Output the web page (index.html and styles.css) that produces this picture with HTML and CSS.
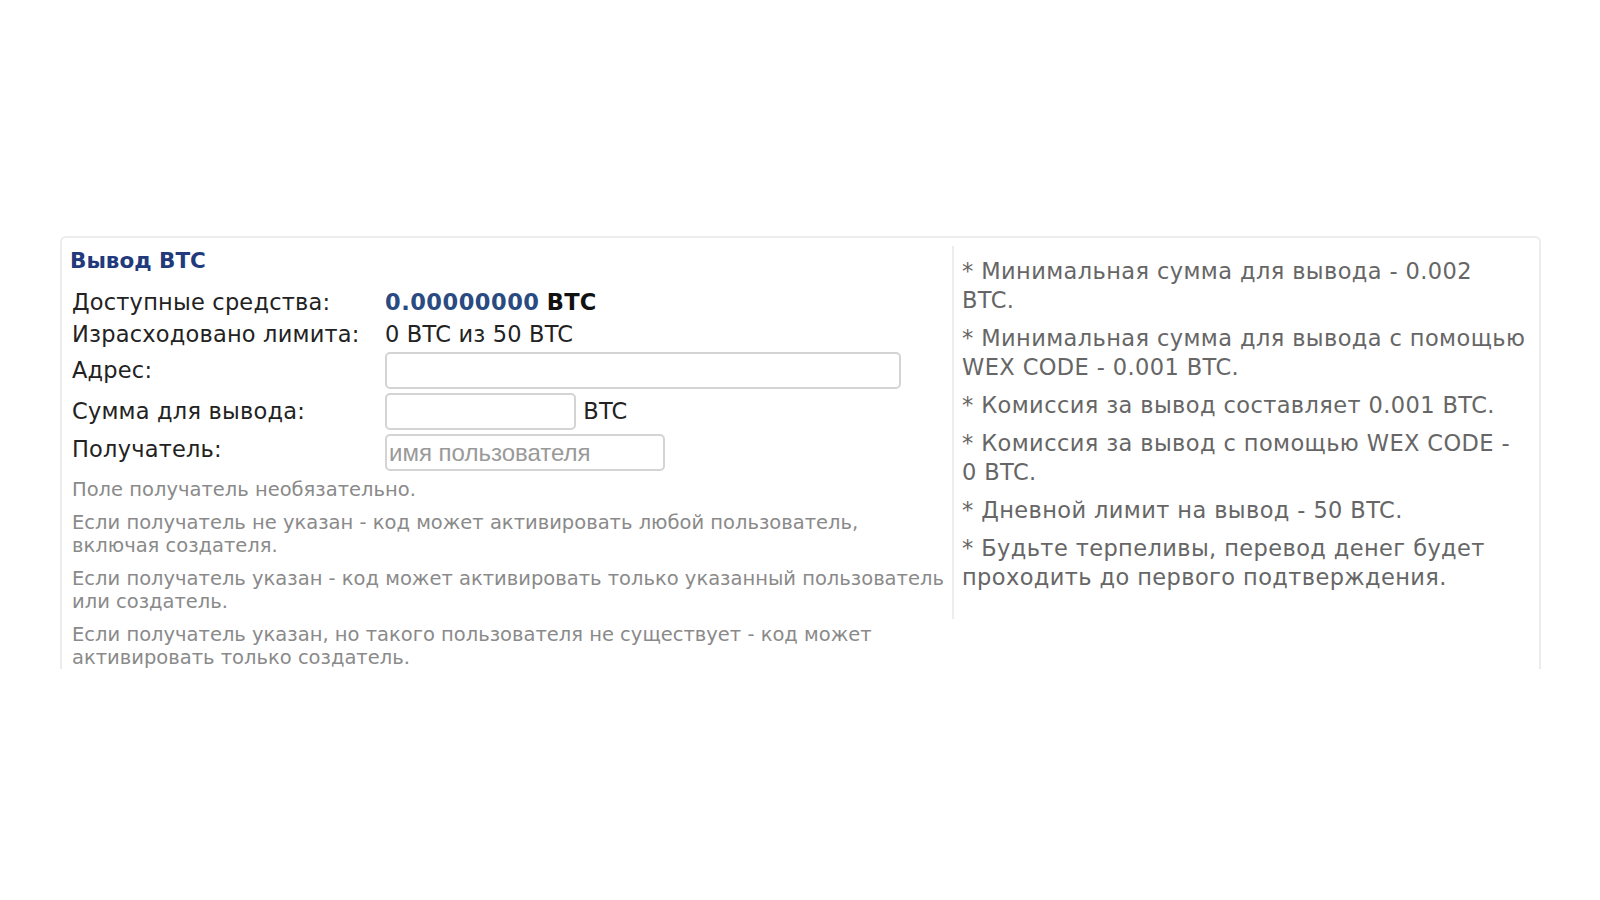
FILE: index.html
```html
<!DOCTYPE html>
<html lang="ru">
<head>
  <meta charset="UTF-8">
  <title>Вывод BTC</title>
  <link rel="stylesheet" href="styles.css">
</head>
<body>

  <div class="panel">
    <div class="left">
      <h2 class="title">Вывод BTC</h2>

      <div class="form">
        <div class="label">Доступные средства:</div>
        <div class="value"><span class="amount">0.00000000</span> <b>BTC</b></div>

        <div class="label">Израсходовано лимита:</div>
        <div class="value">0 BTC из 50 BTC</div>

        <div class="label field">Адрес:</div>
        <div class="value field"><input class="input wide" type="text"></div>

        <div class="label field">Сумма для вывода:</div>
        <div class="value field"><input class="input short" type="text"> BTC</div>

        <div class="label field top">Получатель:</div>
        <div class="value field"><input class="input mid" type="text" placeholder="имя пользователя"></div>
      </div>

      <div class="notes">
        <p>Поле получатель необязательно.</p>
        <p>Если получатель не указан - код может активировать любой пользователь, включая создателя.</p>
        <p>Если получатель указан - код может активировать только указанный пользователь или создатель.</p>
        <p>Если получатель указан, но такого пользователя не существует - код может активировать только создатель.</p>
      </div>
    </div>

    <div class="right">
      <p>* Минимальная сумма для вывода - 0.002 BTC.</p>
      <p>* Минимальная сумма для вывода с помощью WEX CODE - 0.001 BTC.</p>
      <p>* Комиссия за вывод составляет 0.001 BTC.</p>
      <p>* Комиссия за вывод с помощью WEX CODE - 0 BTC.</p>
      <p>* Дневной лимит на вывод - 50 BTC.</p>
      <p>* Будьте терпеливы, перевод денег будет проходить до первого подтверждения.</p>
    </div>
  </div>

</body>
</html>
```

FILE: styles.css
```css
body {
  margin: 0;
  background: white;
  font-family: 'DejaVu Sans', Verdana, sans-serif;
  color: #222;
}

.panel {
  margin: 236px 0 0 60px;
  width: 1477px;
  height: 431px;
  overflow: hidden;
  border: 2px solid #ececec;
  border-bottom: none;
  border-radius: 6px 6px 0 0;
  display: flex;
}

.left {
  width: 882px;
  padding: 0 0 0 8px;
  flex-shrink: 0;
}

.title {
  margin: 10px 0 0 0;
  font-size: 21.5px;
  line-height: 26px;
  font-weight: bold;
  color: #223a7c;
}

.form {
  display: grid;
  grid-template-columns: 313px 1fr;
  margin: 12px 0 0 2px;
  font-size: 22.5px;
  letter-spacing: 0.2px;
}

.label,
.value {
  height: 32px;
  line-height: 32px;
}

.label.field,
.value.field {
  padding-top: 2px;
  height: 39px;
  line-height: 37px;
}

.label.top {
  line-height: 31px;
}

.amount {
  color: #2a4a82;
  font-weight: bold;
  letter-spacing: 0.5px;
}

.value b {
  color: #111;
}

.input {
  box-sizing: border-box;
  height: 37px;
  border: 2px solid #d4d4d4;
  border-radius: 5px;
  font-family: 'Liberation Sans', Arial, sans-serif;
  font-size: 24px;
  letter-spacing: 0;
  padding: 0 2px;
  vertical-align: top;
  background: white;
}

.input::placeholder {
  color: #999;
}

.wide {
  width: 516px;
}

.short {
  width: 191px;
}

.mid {
  width: 280px;
}

.notes {
  width: 875px;
  margin: 5px 0 0 2px;
  font-size: 19.5px;
  line-height: 23.5px;
  color: #8a8a8a;
}

.notes p {
  margin: 0 0 9px 0;
}

.right {
  margin: 8px 0 0 0;
  width: 566px;
  height: 362px;
  border-left: 2px solid #ededed;
  padding: 11px 0 0 8px;
  font-size: 22.5px;
  letter-spacing: 0.4px;
  line-height: 29px;
  color: #666;
}

.right p {
  margin: 0 0 9px 0;
}
```
